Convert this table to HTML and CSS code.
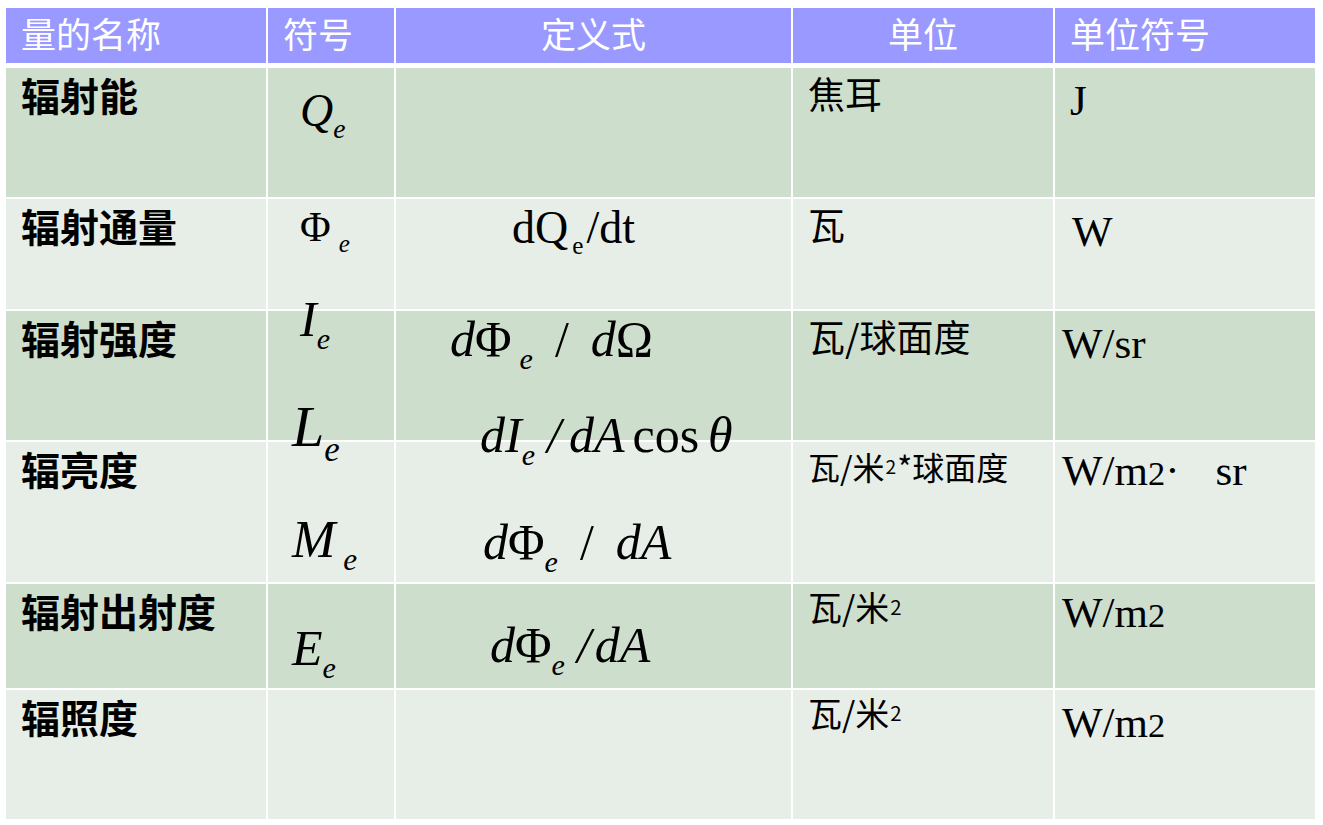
FILE: index.html
```html
<!DOCTYPE html>
<html lang="zh-CN">
<head>
<meta charset="utf-8">
<title>辐射度量</title>
<link rel="stylesheet" href="styles.css">
</head>
<body>
<div class="sheet">
  <div class="table">
    <div class="row head">
      <div class="cell">量的名称</div>
      <div class="cell">符号</div>
      <div class="cell center">定义式</div>
      <div class="cell center">单位</div>
      <div class="cell">单位符号</div>
    </div>

    <div class="row dark">
      <div class="cell name">辐射能</div>
      <div class="cell sym"><div class="f f-q"><i>Q</i><span class="sb">e</span></div></div>
      <div class="cell def"></div>
      <div class="cell unit">焦耳</div>
      <div class="cell usym"><span class="u-j">J</span></div>
    </div>

    <div class="row light">
      <div class="cell name">辐射通量</div>
      <div class="cell sym"><div class="f f-phi">Φ<span class="sb gap">e</span></div></div>
      <div class="cell def"><div class="f f-dq">dQ<span class="sb up">e</span>/dt</div></div>
      <div class="cell unit">瓦</div>
      <div class="cell usym"><span class="u-w">W</span></div>
    </div>

    <div class="row dark">
      <div class="cell name">辐射强度</div>
      <div class="cell sym"><div class="f f-i"><i>I</i><span class="sb">e</span></div></div>
      <div class="cell def"><div class="f f-domega"><i>d</i>Φ<span class="sb gap">e</span><span class="sl sl-wide">/</span><i>d</i>Ω</div></div>
      <div class="cell unit">瓦/球面度</div>
      <div class="cell usym">W/sr</div>
    </div>

    <div class="row light">
      <div class="cell name">辐亮度</div>
      <div class="cell sym">
        <div class="f f-l"><i>L</i><span class="sb">e</span></div>
        <div class="f f-m"><i>M</i><span class="sb gap">e</span></div>
      </div>
      <div class="cell def">
        <div class="f f-dcos"><i>dI</i><span class="sb">e</span><i class="sl sl-mid">/</i><i>dA</i><span class="cos">cos</span><i>θ</i></div>
        <div class="f f-da1"><i>d</i>Φ<span class="sb">e</span><span class="sl sl-wide">/</span><i>dA</i></div>
      </div>
      <div class="cell unit small">瓦/米<span class="sup">2</span>*球面度</div>
      <div class="cell usym tight">W/m<span class="n2">2</span>·<span class="sr">sr</span></div>
    </div>

    <div class="row dark">
      <div class="cell name">辐射出射度</div>
      <div class="cell sym"><div class="f f-e"><i>E</i><span class="sb">e</span></div></div>
      <div class="cell def"><div class="f f-da2"><i>d</i>Φ<span class="sb">e</span><i class="sl sl-narrow">/</i><i>dA</i></div></div>
      <div class="cell unit mid">瓦/米<span class="sup">2</span></div>
      <div class="cell usym tight">W/m<span class="n2">2</span></div>
    </div>

    <div class="row light">
      <div class="cell name">辐照度</div>
      <div class="cell sym"></div>
      <div class="cell def"></div>
      <div class="cell unit mid">瓦/米<span class="sup">2</span></div>
      <div class="cell usym">W/m<span class="n2">2</span></div>
    </div>
  </div>
</div>
</body>
</html>
```

FILE: styles.css
```css
html, body {
  margin: 0;
  background: #ffffff;
}

.sheet {
  padding: 8px 0 0 6px;
}

.table {
  display: grid;
  width: 1309px;
  grid-template-columns: 260px 126px 395px 260px 260px;
  grid-template-rows: 58px 129px 110px 129px 140px 104px 129px;
  gap: 2px;
  background: #ffffff;
}

.row {
  display: contents;
}

.cell {
  box-sizing: border-box;
  line-height: 1;
  padding-left: 15px;
  color: #000;
  font-family: "Noto Sans CJK SC", "Noto Sans", sans-serif;
  min-width: 0;
}

.head > .cell {
  background: #9999ff;
  color: #ffffff;
  font-size: 35px;
  padding-top: 7px;
  border-bottom: 3px solid #ffffff;
}

.head > .center {
  padding-left: 0;
  text-align: center;
}

.dark > .cell {
  background: #cedecd;
}

.light > .cell {
  background: #e7eee8;
}

/* name column */
.name {
  font-size: 39px;
  font-weight: 700;
  padding-top: 7px;
}

/* unit column */
.unit {
  font-size: 37px;
  padding-top: 7px;
}

.unit.small {
  font-size: 32px;
  padding-top: 8px;
}

.unit.mid {
  font-size: 34px;
  padding-top: 6px;
}

.sup {
  font-size: 0.6em;
  position: relative;
  top: -0.3em;
  margin: 0 1px;
}

/* unit symbol column */
.usym {
  font-family: "Liberation Serif", "Times New Roman", serif;
  font-size: 43px;
  padding-left: 7px;
  padding-top: 11px;
}

.usym.tight {
  padding-top: 7px;
}

.u-j {
  margin-left: 8px;
}

.u-w {
  margin-left: 10px;
}

.n2 {
  font-size: 0.8em;
}

.sr {
  margin-left: 36px;
}

/* formulas */
.sym {
  padding-left: 24px;
}

.def {
  padding-left: 0;
}

.f {
  font-family: "Liberation Serif", "Times New Roman", serif;
  line-height: 1;
  white-space: nowrap;
  color: #000;
}

.f i {
  font-style: italic;
}

.sb {
  font-style: italic;
  font-size: 0.6em;
  position: relative;
  top: 0.42em;
}

.sb.up {
  font-style: normal;
  font-size: 0.55em;
  margin-left: 4px;
  margin-right: 3px;
}

.sb.gap {
  margin-left: 8px;
}

.sl {
  display: inline-block;
}

.sl-wide {
  margin: 0 22px 0 22px;
}

.sl-mid {
  margin: 0 8px 0 12px;
}

.sl-narrow {
  margin: 0 4px 0 12px;
}

.cos {
  margin: 0 9px 0 8px;
}

.f-q {
  font-size: 46px;
  margin: 20px 0 0 8px;
}

.f-phi {
  font-size: 42px;
  margin: 7px 0 0 8px;
}

.f-i {
  font-size: 50px;
  margin: -17px 0 0 8px;
}

.f-l {
  font-size: 58px;
  margin: -44px 0 0 0;
}

.f-m {
  font-size: 52px;
  margin: 58px 0 0 0;
}

.f-e {
  font-size: 50px;
  margin: 39px 0 0 0;
}

.f-dq {
  font-size: 46px;
  margin: 6px 0 0 116px;
}

.f-domega {
  font-size: 50px;
  margin: 3px 0 0 54px;
}

.f-dcos {
  font-size: 50px;
  margin: -32px 0 0 84px;
}

.f-da1 {
  font-size: 50px;
  margin: 57px 0 0 87px;
}

.f-da2 {
  font-size: 50px;
  margin: 36px 0 0 94px;
}
```
